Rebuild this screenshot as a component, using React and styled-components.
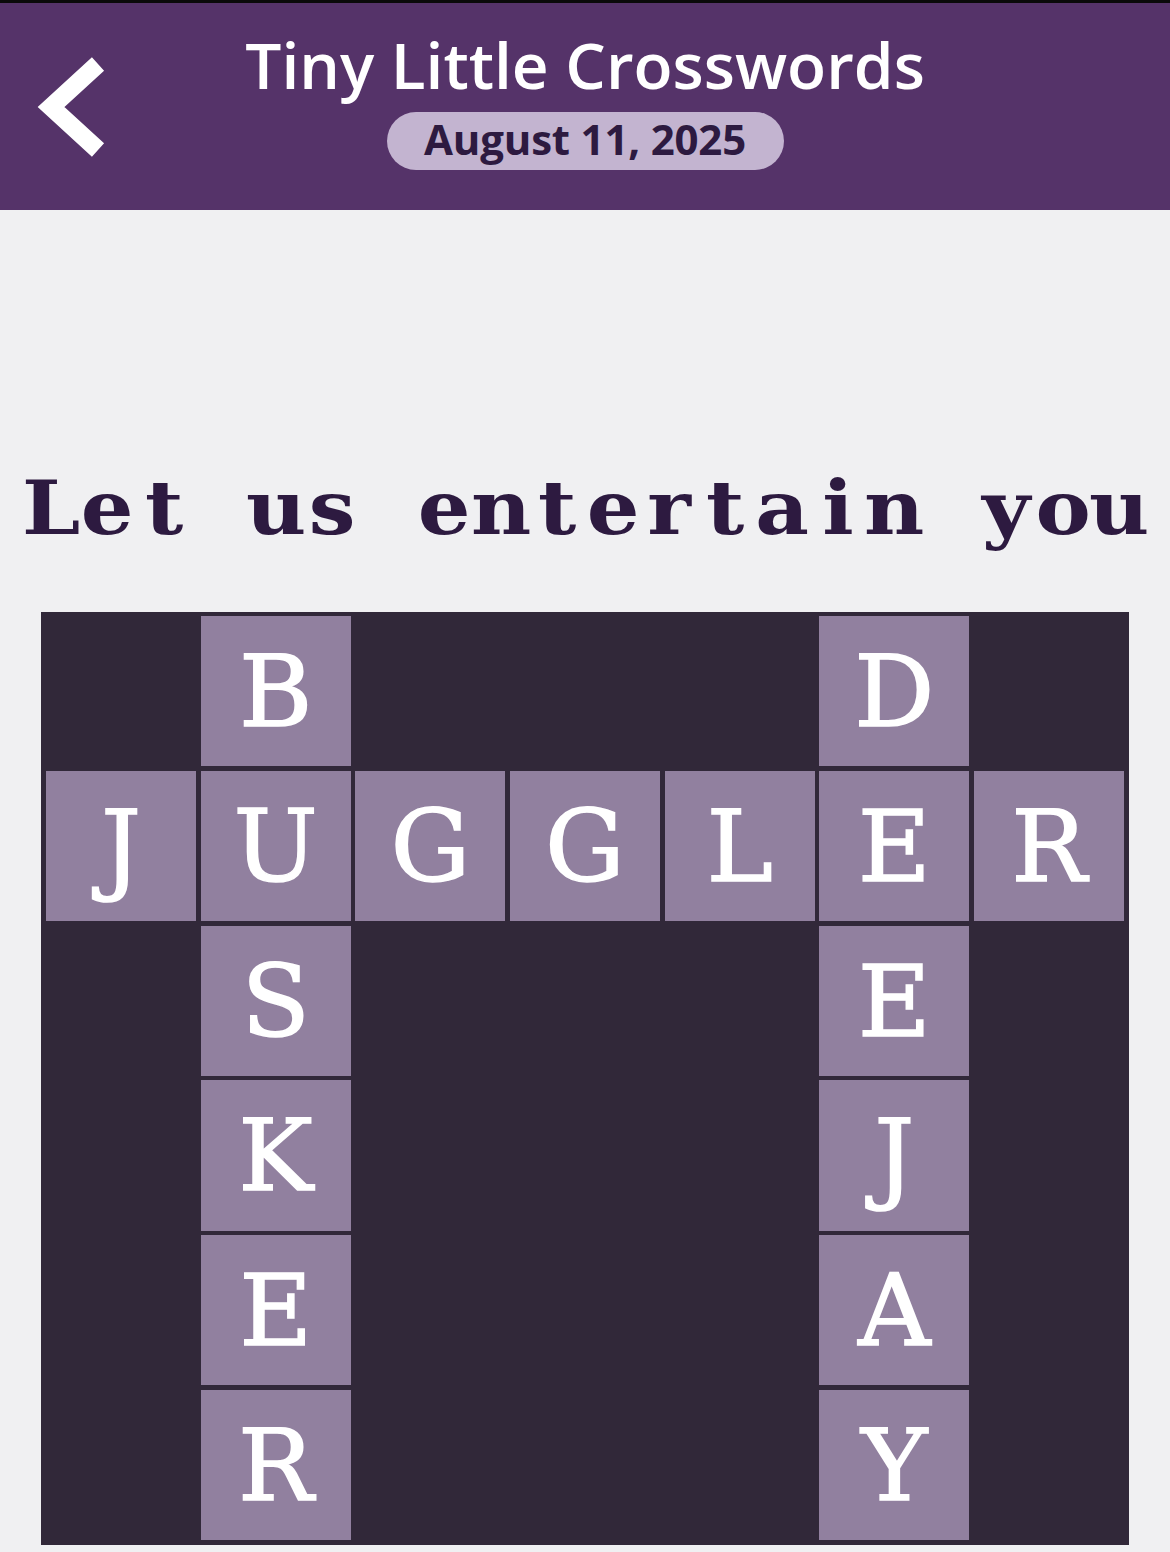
import React from "react";
import styled, { createGlobalStyle } from "styled-components";

const Global = createGlobalStyle`
  html, body { margin: 0; padding: 0; background: #f0f0f2; }
  body { font-family: "Open Sans", "Liberation Sans", sans-serif; }
  * { box-sizing: border-box; }
`;

const SLAB = `"DejaVu Serif", "Liberation Serif", serif`;

const Page = styled.div`
  width: 1170px;
  min-height: 1552px;
  background: #f0f0f2;
  display: flex;
  flex-direction: column;
`;

const Header = styled.header`
  height: 210px;
  background: #553369;
  border-top: 3px solid #0a0a0a;
  display: grid;
  grid-template-columns: 160px 1fr 160px;
  align-items: start;
`;

const BackButton = styled.button`
  background: none;
  border: none;
  padding: 0;
  margin: 49px 0 0 36px;
  width: 72px;
  height: 108px;
  cursor: pointer;
  display: flex;
`;

const TitleBlock = styled.div`
  display: flex;
  flex-direction: column;
  align-items: center;
  padding-top: 19px;
`;

const Title = styled.h1`
  margin: 0;
  color: #ffffff;
  font-family: "Open Sans", "Liberation Sans", sans-serif;
  font-weight: 600;
  font-size: 64px;
  line-height: 86px;
`;

const DatePill = styled.div`
  margin-top: 4px;
  height: 58px;
  width: 397px;
  border-radius: 29px;
  background: #c3b4d0;
  color: #2d1a40;
  font-family: "Open Sans", "Liberation Sans", sans-serif;
  font-weight: 700;
  font-size: 42px;
  padding-bottom: 6px;
  display: flex;
  align-items: center;
  justify-content: center;
  letter-spacing: -0.2px;
`;

const Main = styled.main`
  display: flex;
  flex-direction: column;
  align-items: center;
`;

const Theme = styled.h2`
  margin: 251px 0 0 0;
  height: 151px;
  color: #2d1a40;
  font-family: ${SLAB};
  font-weight: 700;
  font-size: 74px;
  line-height: 94px;
  white-space: nowrap;
  display: flex;
`;

const Glyph = styled.span`
  display: inline-block;
  width: 56.2px;
  text-align: center;
  transform: scaleX(1.12);
`;

const Board = styled.div`
  width: 1088px;
  height: 933px;
  background: #312839;
  padding: 4px 5px 5px 5px;
  display: grid;
  grid-template-columns: repeat(7, 1fr);
  grid-template-rows: repeat(6, 1fr);
  gap: 4.5px 4.5px;
`;

const Cell = styled.div`
  background: ${(p) => (p.$filled ? "#91809f" : "transparent")};
  color: #ffffff;
  font-family: ${SLAB};
  font-weight: 400;
  font-size: 100px;
  -webkit-text-stroke: 1.5px #ffffff;
  display: flex;
  align-items: center;
  justify-content: center;
  line-height: 1;
  padding-top: 2px;
`;

const rows = [
  "_B___D_",
  "JUGGLER",
  "_S___E_",
  "_K___J_",
  "_E___A_",
  "_R___Y_",
];

const theme = "Let us entertain you";

export default function App() {
  return (
    <Page>
      <Global />
      <Header>
        <BackButton aria-label="Back">
          <svg width="72" height="108" viewBox="0 0 72 108">
            <polyline
              points="62,12 15,55 62,98"
              fill="none"
              stroke="#ffffff"
              strokeWidth="18"
              strokeLinecap="butt"
              strokeLinejoin="miter"
            />
          </svg>
        </BackButton>
        <TitleBlock>
          <Title>Tiny Little Crosswords</Title>
          <DatePill>August 11, 2025</DatePill>
        </TitleBlock>
        <div />
      </Header>
      <Main>
        <Theme aria-label={theme}>
          {theme.split("").map((c, i) => (
            <Glyph key={i}>{c === " " ? "\u00a0" : c}</Glyph>
          ))}
        </Theme>
        <Board>
          {rows.flatMap((r, ri) =>
            r.split("").map((ch, ci) => (
              <Cell key={`${ri}-${ci}`} $filled={ch !== "_"}>
                {ch !== "_" ? ch : ""}
              </Cell>
            ))
          )}
        </Board>
      </Main>
    </Page>
  );
}
